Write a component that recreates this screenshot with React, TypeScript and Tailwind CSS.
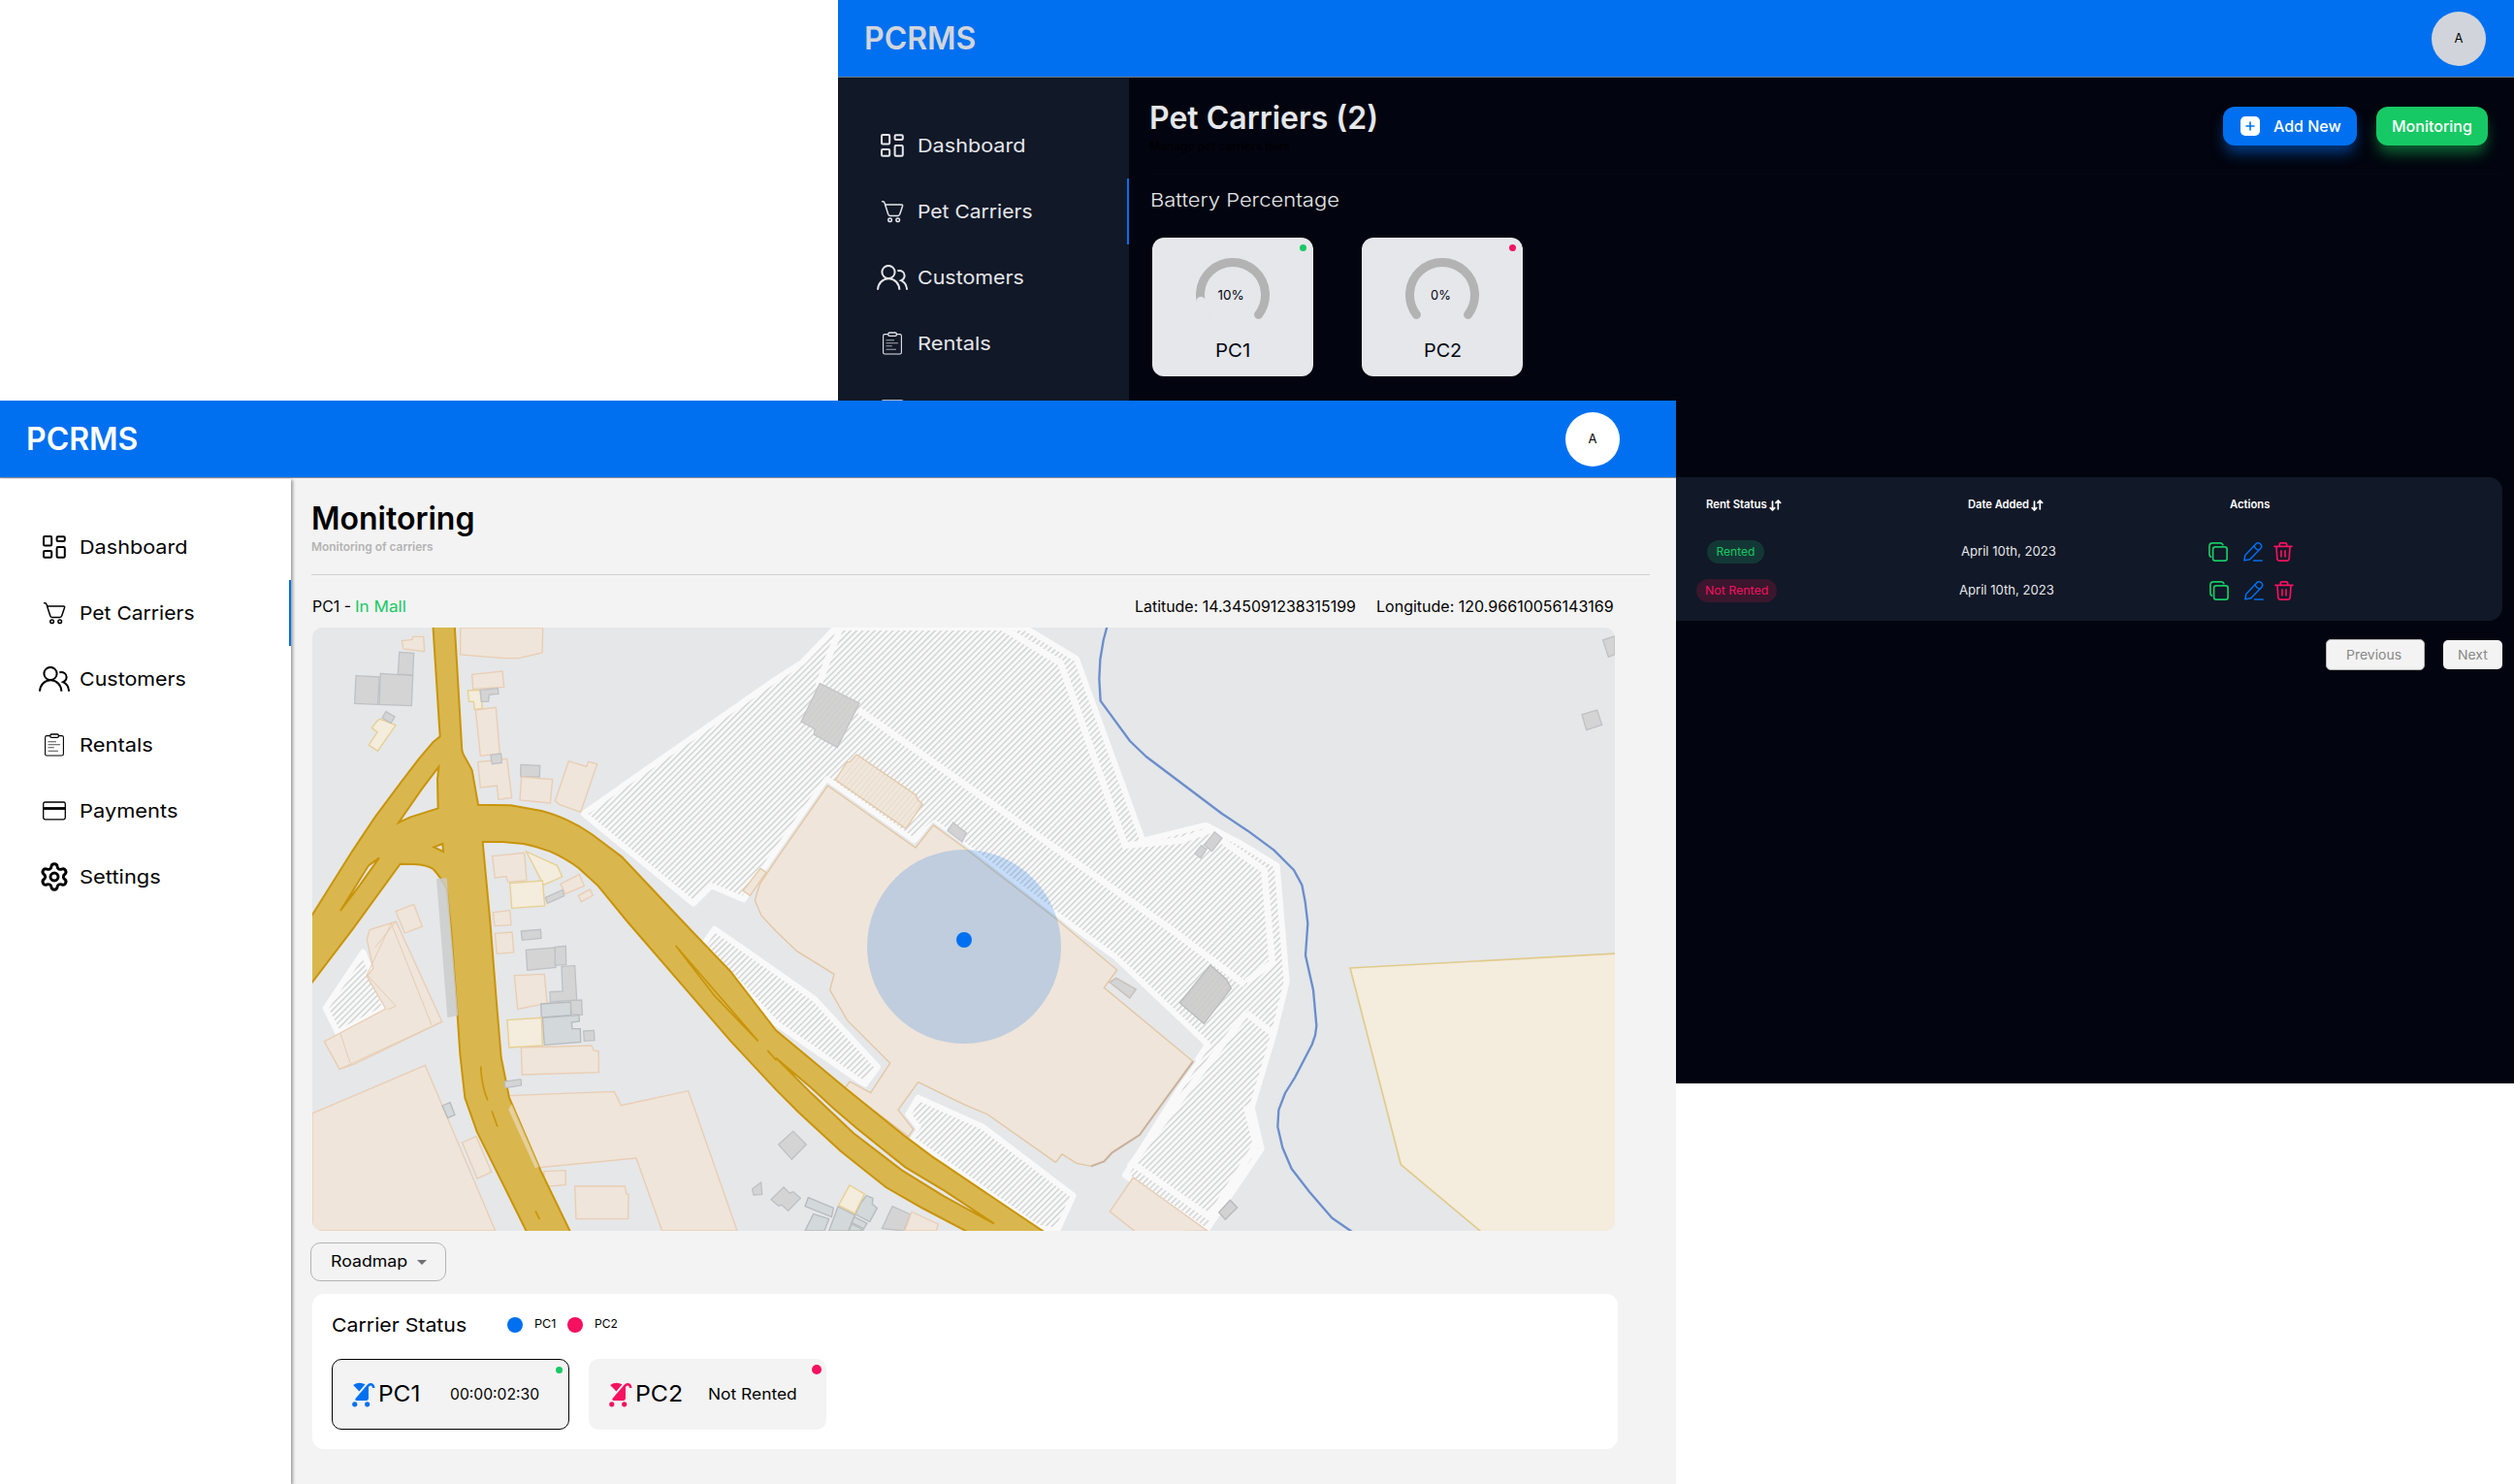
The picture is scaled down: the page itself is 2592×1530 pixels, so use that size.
import { useLayoutEffect, useRef, useState, type ReactNode } from "react";
import { MdStroller } from "react-icons/md";
import { Settings } from "lucide-react";

/** A label stretched or narrowed to a fixed width. */
function Fit({ w, children, className = "" }: { w: number; children: ReactNode; className?: string }) {
  const ref = useRef<HTMLSpanElement>(null);
  const [scale, setScale] = useState(1);
  useLayoutEffect(() => {
    if (ref.current) setScale(w / ref.current.offsetWidth);
  }, [w]);
  return (
    <span className={`inline-block whitespace-nowrap text-left ${className}`} style={{ width: w }}>
      <span ref={ref} className="inline-block origin-left" style={{ transform: `scaleX(${scale})` }}>
        {children}
      </span>
    </span>
  );
}

/* ---------- sidebar icons ---------- */

const DashboardIcon = () => (
  <svg width="24" height="24" viewBox="0 0 24 24" fill="none" stroke="currentColor" strokeWidth="2">
    <rect x="1" y="1" width="8.2" height="9.4" rx="1.2" />
    <rect x="14.6" y="1.2" width="8.2" height="4.8" rx="1.2" />
    <rect x="1" y="16" width="8.2" height="6.8" rx="1.2" />
    <rect x="14.6" y="12" width="8.2" height="10.8" rx="1.2" />
  </svg>
);

const CartIcon = () => (
  <svg width="24" height="24" viewBox="0 0 24 24" fill="none" stroke="currentColor" strokeWidth="1.5" strokeLinecap="round" strokeLinejoin="round">
    <path d="M1.6 1.7h.8c1.1 0 1.5.8 1.8 1.9l.4 1.3" />
    <path d="M4.6 5h17c.8 0 1.2.6 1 1.3l-2.9 8.6c-.3 1-.9 1.5-1.900 1.500H9.600c-1 0-1.600-.5-1.800-1.500L4.600 5z" />
    <circle cx="9.600" cy="20.800" r="1.800" />
    <circle cx="17.700" cy="20.800" r="1.800" />
  </svg>
);

const UsersIcon = () => (
  <svg width="32" height="26" viewBox="0 0 32 26" fill="none" stroke="currentColor" strokeWidth="2">
    <circle cx="12" cy="7.500" r="6.600" />
    <path d="M1 25.800C1.400 19 6 14.300 12.200 14.300S23 19 23.400 25.800" />
    <path d="M21.300 6.200c4.200-.9 7.300 1.400 7.300 4.800 0 2.600-1.500 4.300-3.600 5.200 3.600 1.600 5.800 5 6.100 9.600" />
  </svg>
);

const ClipboardIcon = () => (
  <svg width="22" height="24" viewBox="0 0 22 24" fill="none" stroke="currentColor" strokeWidth="1.1">
    <path d="M6.800 2.600H3.200a1.600 1.600 0 0 0-1.600 1.600v17.200A1.600 1.600 0 0 0 3.200 23h15.600a1.600 1.600 0 0 0 1.600-1.600V4.200a1.600 1.600 0 0 0-1.600-1.600h-3.400" />
    <rect x="6.800" y="1" width="8.600" height="3.400" rx="1.400" strokeWidth="1.300" />
    <path d="M4.500 8.800h8.500M4.500 11.800h12.500M4.500 14.800h6.300M4.500 18.200h10.500" strokeOpacity=".7" />
  </svg>
);

const CardIcon = () => (
  <svg width="24" height="20" viewBox="0 0 24 20" fill="none" stroke="currentColor" strokeWidth="1.300">
    <rect x=".7" y="1" width="22.600" height="17.800" rx="1.800" />
    <path d="M.7 7.500h22.600" strokeWidth="2.800" />
  </svg>
);

const GearIcon = () => <Settings size={32} strokeWidth={2.200} />;

const NAV = [
  { label: "Dashboard", w: 111, Icon: DashboardIcon },
  { label: "Pet Carriers", w: 119, Icon: CartIcon },
  { label: "Customers", w: 110, Icon: UsersIcon },
  { label: "Rentals", w: 76, Icon: ClipboardIcon },
  { label: "Payments", w: 102, Icon: CardIcon },
  { label: "Settings", w: 84, Icon: GearIcon },
];

function Nav() {
  return (
    <nav className="flex flex-col pt-9">
      {NAV.map(({ label, w, Icon }) => (
        <div
          key={label}
          className={`flex h-[68px] items-center border-r-2 pl-10 ${
            label === "Pet Carriers" ? "border-[#0070f0]" : "border-transparent"
          }`}
        >
          <span className="flex w-8 items-center justify-center">
            <Icon />
          </span>
          <Fit w={w} className="ml-[9.500px] text-[19.300px] font-[430]">
            {label}
          </Fit>
        </div>
      ))}
    </nav>
  );
}

function TopBar({ dark = false }: { dark?: boolean }) {
  return (
    <header
      className={`flex h-20 items-center justify-between border-b bg-[#0070f0] pl-[27px] ${
        dark ? "border-[#71777f] pr-[29px] text-[#d1d5db]" : "border-[#8a8f96] pr-[58px] text-white"
      }`}
    >
      <Fit w={115} className="pt-px text-[32px] font-[580] leading-10">
        PCRMS
      </Fit>
      <span
        className={`mt-px flex h-14 w-14 items-center justify-center rounded-full text-[13px] text-black ${
          dark ? "bg-[#d1d5db]" : "bg-white"
        }`}
      >
        A
      </span>
    </header>
  );
}

/* ---------- dark window ---------- */

function Gauge({ percent }: { percent: number }) {
  const point = (deg: number) => {
    const a = (deg * Math.PI) / 180;
    return `${42 + 33.500 * Math.cos(a)} ${42 + 33.500 * Math.sin(a)}`;
  };
  const end = 142.500 + percent * 2.550;
  return (
    <svg width="84" height="84" viewBox="0 0 84 84" fill="none" strokeWidth="9" strokeLinecap="round">
      <path d={`M${point(142.500)}A33.500 33.500 0 1 1 ${point(37.500)}`} stroke="#b3b3b3" />
      {percent > 0 && (
        <path d={`M${point(142.500)}A33.500 33.500 0 0 1 ${point(end)}`} stroke="#e5e7eb" strokeWidth="10" />
      )}
    </svg>
  );
}

function BatteryCard({ name, nameW, percent, percentW, dot }: { name: string; nameW: number; percent: number; percentW: number; dot: string }) {
  return (
    <div className="relative flex h-[143px] w-[166px] flex-col items-center rounded-xl bg-[#e5e7eb] pt-[17px] text-[#02050f]">
      <span className={`absolute right-[7px] top-[7px] h-[7px] w-[7px] rounded-full ${dot}`} />
      <div className="grid place-items-center">
        <div className="col-start-1 row-start-1">
          <Gauge percent={percent} />
        </div>
        <Fit w={percentW} className="col-start-1 row-start-1 mr-1 text-[13.500px] font-[430]">
          {percent}%
        </Fit>
      </div>
      <Fit w={nameW} className="mt-[1px] text-[19.300px] font-[430] leading-7">
        {name}
      </Fit>
    </div>
  );
}

const SortArrows = () => (
  <svg width="13" height="12" viewBox="0 0 13 12" fill="none" stroke="currentColor" strokeWidth="1.700" strokeLinecap="round" strokeLinejoin="round">
    <path d="M3.500 2v9M1.200 8.600 3.500 11l2.200-2.400M9.300 9.800V1M7 3.400 9.300 1l2.300 2.400" />
  </svg>
);

const CopyIcon = () => (
  <svg width="20" height="20" viewBox="0 0 20 20" fill="none" stroke="#17c964" strokeWidth="1.700" strokeLinecap="round">
    <rect x="4.600" y="4.800" width="14.500" height="14.300" rx="2.400" />
    <path d="M2.600 15.200C1.400 14.700.9 13.900.9 12.600V4.400C.9 2.200 2 .9 4.300.9h7.900c1.300 0 2.100.5 2.600 1.700" />
  </svg>
);

const PenIcon = () => (
  <svg width="20" height="20" viewBox="0 0 20 20" fill="none" stroke="#0070f0" strokeWidth="1.500" strokeLinecap="round" strokeLinejoin="round">
    <path d="M.9 18.800 1.600 14.300Q1.700 13.700 2.200 13.100L12.700 1.900Q14.900-.2 17.400 1.700 19.800 3.900 17.900 6.300L7.200 17.300Q6.700 17.900 5.900 18z" />
    <path d="M11.200 3.700Q12 7.300 15.800 8.200M10.500 18.900H19.200" />
  </svg>
);

const TrashIcon = () => (
  <svg width="20" height="20" viewBox="0 0 20 20" fill="none" stroke="#f31260" strokeWidth="1.700" strokeLinecap="round" strokeLinejoin="round">
    <path d="M1 4.300h18M6.300 4V2.200C6.300 1.300 6.800.9 7.600.9h4.800c.8 0 1.300.4 1.300 1.300V4M3 4.500l.8 12.300c.1 1.500.8 2.300 2.400 2.300h7.600c1.600 0 2.300-.8 2.400-2.300L17 4.500M8 8.800v6M12 8.800v6" />
  </svg>
);

function Actions() {
  return (
    <>
      <CopyIcon />
      <span className="ml-[15.500px]">
        <PenIcon />
      </span>
      <span className="ml-[11.500px]">
        <TrashIcon />
      </span>
    </>
  );
}

function DarkWindow() {
  return (
    <section className="absolute left-[864px] top-0 flex h-[1117px] w-[1728px] flex-col overflow-hidden bg-[#02050f]">
      <TopBar dark />
      <div className="flex flex-1">
        <aside className="w-[300px] bg-[#111827] text-[#e5e7eb]">
          <Nav />
        </aside>
        <main className="flex flex-1 flex-col pl-[21px] pr-3 pt-[22px] text-[#e5e7eb]">
          <div className="flex justify-between pr-[15px]">
            <div className="flex flex-col">
              <Fit w={236} className="text-[32px] font-[580] leading-10">
                Pet Carriers (2)
              </Fit>
              <Fit w={145} className="text-xs font-semibold leading-[18px] text-[#000006]">
                Manage pet carriers here
              </Fit>
            </div>
            <div className="mt-2 flex h-10 gap-5 text-base font-[460] text-white">
              <button className="flex w-[138px] items-center rounded-xl bg-[#0070f0] pl-[18px] shadow-[0_10px_14px_-2px_#003a80]">
                <svg width="20" height="20" viewBox="0 0 20 20">
                  <rect width="20" height="20" rx="5" fill="#fff" />
                  <path d="M10 6v8M6 10h8" stroke="#0070f0" strokeWidth="1.600" strokeLinecap="round" />
                </svg>
                <Fit w={70} className="ml-[14px]">
                  Add New
                </Fit>
              </button>
              <button className="flex w-[115px] items-center justify-center rounded-xl bg-[#17c964] shadow-[0_10px_14px_-2px_#0b6332]">
                <Fit w={83}>Monitoring</Fit>
              </button>
            </div>
          </div>
          <hr className="mt-[19px] border-[#050812]" />
          <Fit w={195} className="ml-px mt-3 text-[19.300px] font-[340] leading-7">
            Battery Percentage
          </Fit>
          <div className="ml-[3px] mt-[25px] flex gap-[50px]">
            <BatteryCard name="PC1" nameW={36} percent={10} percentW={27} dot="bg-[#17c964]" />
            <BatteryCard name="PC2" nameW={39} percent={0} percentW={21} dot="bg-[#f31260]" />
          </div>
          <div className="mt-[104px] h-[148px] rounded-[14px] bg-[#111827] pt-2">
            <div className="mb-2 grid h-10 grid-cols-[564px_272px_257px_1fr] items-center pt-px text-[11.500px] font-semibold text-white">
              <span />
              <span className="flex items-center pl-[10px]">
                <Fit w={63}>Rent Status</Fit>
                <span className="ml-[2px]">
                  <SortArrows />
                </span>
              </span>
              <span className="flex items-center pl-2">
                <Fit w={63}>Date Added</Fit>
                <span className="ml-[2px]">
                  <SortArrows />
                </span>
              </span>
              <span className="pl-[21px]">
                <Fit w={41}>Actions</Fit>
              </span>
            </div>
            <div className="grid h-10 grid-cols-[564px_272px_257px_1fr] items-center pt-px">
              <span />
              <span className="ml-[11px] flex h-6 w-[59px] items-center justify-center rounded-xl bg-[#133735] text-xs text-[#17c964]">
                <Fit w={40}>Rented</Fit>
              </span>
              <span className="pl-px text-[13.500px] font-[380]">
                <Fit w={98}>April 10th, 2023</Fit>
              </span>
              <span className="-ml-px flex items-center">
                <Actions />
              </span>
            </div>
            <div className="grid h-10 grid-cols-[564px_272px_257px_1fr] items-center pt-px">
              <span />
              <span className="flex h-6 w-[83px] items-center justify-center rounded-xl bg-[#3a172d] text-xs text-[#f31260]">
                <Fit w={65}>Not Rented</Fit>
              </span>
              <span className="-ml-px text-[13.500px] font-[380]">
                <Fit w={98}>April 10th, 2023</Fit>
              </span>
              <span className="flex items-center">
                <Actions />
              </span>
            </div>
          </div>
          <div className="mt-[19px] flex items-center justify-end gap-[19px] text-[13.500px] text-[#888888]">
            <button className="flex h-8 w-[102px] items-center justify-center rounded-[5px] border border-[#b3b3b3] bg-[#f3f3f3]">
              <Fit w={57} className="-ml-1">
                Previous
              </Fit>
            </button>
            <button className="flex h-[30px] w-[61px] items-center justify-center rounded-[5px] bg-[#f3f3f3]">
              <Fit w={31}>Next</Fit>
            </button>
          </div>
        </main>
      </div>
    </section>
  );
}

/* ---------- map ---------- */

type Kind = "peach" | "cream" | "grey" | "slate";

const PAINT: Record<Kind, [string, string]> = {
  peach: ["#efe5da", "#e9cdb3"],
  cream: ["#f4ecdc", "#e6cf8f"],
  grey: ["#d4d4d4", "#bfc1c4"],
  slate: ["#d3d8da", "#b7babd"],
};

const BUILDINGS: [Kind, string][] = [
  ["peach", "283,62 315,58 318,49 350,49 353,95 287,87"],
  ["grey", "275,97 320,100 317,168 271,165"],
  ["grey", "141,170 213,174 209,259 137,256"],
  ["grey", "217,163 317,170 313,263 213,259"],
  ["cream", "215,304 264,323 208,403 181,384 207,345 190,331 207,310"],
  ["grey", "234,281 261,297 249,317 222,300"],
  ["peach", "464,21 719,21 717,99 645,116 600,116 464,105"],
  ["peach", "500,166 594,156 599,205 503,211"],
  ["cream", "487,216 525,214 532,272 508,274 505,250 491,250"],
  ["grey", "525,214 580,209 582,226 553,229 551,250 529,250"],
  ["peach", "511,276 574,268 586,411 526,418"],
  ["peach", "518,437 608,427 623,547 582,553 577,510 526,516"],
  ["grey", "558,415 590,411 592,439 562,443"],
  ["grey", "651,445 710,448 709,483 650,482"],
  ["peach", "653,483 749,491 742,564 648,555"],
  ["peach", "799,434 854,451 860,436 887,443 836,592 770,568 757,557"],
  ["peach", "563,728 662,718 669,803 611,808 606,791 571,795"],
  ["cream", "668,714 763,757 779,792 721,817"],
  ["cream", "617,812 718,804 725,882 623,889"],
  ["peach", "774,814 832,784 847,820 789,845"],
  ["grey", "727,856 780,832 785,851 733,874"],
  ["peach", "829,850 865,831 874,849 838,869"],
  ["peach", "565,902 617,896 621,941 570,944"],
  ["peach", "264,899 320,877 346,945 292,966"],
  ["peach", "571,967 624,963 629,1026 577,1030"],
  ["grey", "652,960 712,955 714,982 655,988"],
  ["grey", "667,1018 757,1011 759,1072 671,1081"],
  ["grey", "757,1009 790,1006 791,1063 757,1066"],
  ["grey", "777,1069 818,1067 824,1173 742,1179 741,1148 780,1146"],
  ["peach", "631,1097 724,1093 732,1183 641,1201"],
  ["slate", "713,1185 805,1179 806,1220 715,1227"],
  ["grey", "805,1175 839,1173 841,1219 808,1217"],
  ["slate", "718,1228 831,1220 832,1239 808,1242 810,1262 835,1262 836,1303 724,1312"],
  ["grey", "845,1269 877,1267 879,1298 847,1300"],
  ["cream", "609,1235 715,1228 718,1314 615,1320"],
  ["peach", "652,1320 870,1314 876,1329 891,1331 892,1397 655,1404"],
  ["peach", "6,1524 355,1375 572,1887 6,1887"],
  ["slate", "408,1500 432,1490 447,1528 425,1538"],
  ["peach", "470,1614 513,1595 560,1705 516,1725"],
  ["peach", "183,956 265,930 407,1240 137,1371 90,1387 43,1301 233,1200 175,1100 194,1075 175,985"],
  ["peach", "613,1469 940,1456 961,1499 1169,1454 1320,1887 1088,1887 1008,1662 706,1691 620,1500"],
  ["peach", "722,1703 789,1700 790,1745 726,1750"],
  ["peach", "818,1749 973,1749 977,1772 984,1774 983,1850 822,1850"],
  ["grey", "1367,1757 1394,1737 1397,1774 1371,1776"],
  ["grey", "1448,1620 1493,1579 1534,1620 1489,1666"],
  ["grey", "1425,1790 1464,1752 1482,1770 1494,1766 1516,1786 1478,1825 1458,1807 1448,1810"],
  ["slate", "1540,1784 1618,1816 1612,1844 1530,1811"],
  ["slate", "1556,1835 1604,1850 1590,1887 1530,1887"],
  ["slate", "1632,1812 1684,1838 1664,1887 1604,1887"],
  ["slate", "1720,1778 1740,1786 1738,1804 1753,1817 1730,1859 1686,1836 1700,1805"],
  ["slate", "1683,1844 1722,1864 1712,1880 1674,1862"],
  ["slate", "1674,1866 1710,1884 1700,1887 1666,1887"],
  ["cream", "1668,1746 1714,1773 1684,1833 1634,1808"],
  ["grey", "1800,1811 1856,1836 1836,1887 1768,1880"],
  ["peach", "1860,1828 1942,1866 1936,1887 1838,1887"],
  ["grey", "3998,60 4035,47 4035,104 4015,112"],
  ["grey", "3933,290 3980,276 3995,322 3947,338"],
];

const FIELD = "3216,1074 4045,1029 4045,1897 3630,1897 3373,1682";

const LOT =
  "845,597 1000,487 1440,181 1520,130 1625,21 2210,21 2370,118 2575,680 2770,632 2880,690 2990,758 3020,1116 2980,1279 2912,1506 2942,1634 2770,1887 2520,1715 2775,1310 2490,1040 2310,910 1930,625 1865,680 1598,490 1400,770 1340,862 1240,820 1185,875";

const SIDE_LOTS = [
  "1250,953 1440,1085 1560,1170 1755,1380 1715,1435 1440,1245 1215,1002",
  "1880,1475 2080,1565 2360,1778 2310,1887 2250,1877 1852,1598 1880,1565 1848,1528",
  "163,1025 233,1198 85,1275 47,1198",
];

const MALL =
  "1600,510 1872,702 1927,632 2020,700 2310,925 2495,1080 2455,1135 2730,1363 2630,1500 2565,1590 2480,1645 2455,1672 2415,1687 2370,1678 2325,1650 2305,1675 2095,1527 2020,1495 1880,1427 1818,1513 1865,1573 1850,1595 1653,1447 1668,1425 1733,1460 1793,1368 1660,1235 1607,1142 1620,1093 1505,1022 1440,960 1395,912 1375,865 1390,815 1440,740";

const ROAD =
  "M379 11H446L468 385Q468 405 474 415L500 462L519 569L620 571L715 588Q760 600 795 617Q835 635 870 660L963 730L1050 822L1180 960L1300 1085L1440 1267L1660 1450L1840 1595L1920 1655L2275 1894H2040L1890 1815L1780 1752L1640 1640L1510 1520L1440 1450L1300 1300L980 930L890 820L830 765Q790 735 740 713Q700 698 660 690L595 684H533L556 930L575 1170L590 1350L615 1475L712 1700L806 1894H671L515 1580L478 1475L463 1340L455 1220L435 950L422 830Q405 795 380 768Q362 755 320 753L278 752L130 955L-5 1132V927L130 712L200 607L280 500L335 428L380 375L401 358Z" +
  "M397 452L345 520L273 624L310 607L395 580L393 490Z M382 700L409 690L411 714Z M213 733L180 757L93 897L155 815Z" +
  "M1440 1352L1550 1445L1620 1510L1690 1570L1840 1690L1960 1762L2115 1865L1960 1780L1830 1700L1680 1585L1550 1462Z";

const RIVER =
  "2465,15 2453,60 2443,120 2440,180 2444,248 2535,372 2585,420 2820,597 2900,650 2980,709 3042,771 3067,817 3077,869 3085,936 3078,1035 3102,1142 3112,1253 3108,1282 3098,1311 3045,1413 3015,1461 2995,1513 2992,1565 3007,1630 3035,1695 3090,1766 3160,1847 3225,1892";

function CarrierMap() {
  return (
    <svg className="mt-[10px] block h-[622px] w-[1343px] rounded-[10px]" viewBox="6 21 4029 1866" preserveAspectRatio="none">
      <defs>
        <pattern id="hatch" width="13.200" height="13.200" patternUnits="userSpaceOnUse" patternTransform="rotate(-45)">
          <rect width="13.200" height="13.200" fill="#f9f9f9" />
          <rect width="13.200" height="4.200" fill="#cfd1d1" />
        </pattern>
        <pattern id="roofHatch" width="13.200" height="13.200" patternUnits="userSpaceOnUse" patternTransform="rotate(-50)">
          <rect width="13.200" height="2" fill="#c2b9b0" fillOpacity=".35" />
        </pattern>
      </defs>
      <rect x="0" y="0" width="4100" height="1900" fill="#e5e7e9" />

      <g fill="url(#hatch)" stroke="#f9f9f9" strokeWidth="18" strokeLinejoin="round">
        <polygon points={LOT} />
        {SIDE_LOTS.map((p) => (
          <polygon key={p} points={p} />
        ))}
      </g>
      <g fill="none" stroke="#f9f9f9" strokeWidth="20">
        <path d="M1640 21L1600 120L1572 200M1695 275L2670 960L2890 1125" />
        <path d="M2140 21L2320 130L2360 240L2520 695L2690 680L2790 645L2830 687L2950 771L2975 1057L2895 1116" />
        <path d="M2895 1213L2975 1275M2895 1213L2540 1680L2560 1690L2790 1850M2895 1500L2925 1620L2780 1850" />
      </g>

      <polygon points={MALL} fill="#e5e7e9" stroke="#e5e7e9" strokeWidth="14" />
      <polygon points={MALL} fill="#efe5da" stroke="#e2c6a2" strokeWidth="4" />
      <path d="M2730 1363L2630 1500L2565 1590L2480 1645L2455 1672L2415 1687" fill="none" stroke="#c9b19b" strokeWidth="6" />

      {BUILDINGS.map(([kind, points]) => (
        <polygon key={points} points={points} fill={PAINT[kind][0]} stroke={PAINT[kind][1]} strokeWidth="4" />
      ))}
      <polygon points={FIELD} fill="#f4ecdc" stroke="#e0cb8c" strokeWidth="5" />
      <g fill="none" stroke="#e6ccb2" strokeWidth="3">
        <path d="M250 936L175 1095L265 1192L240 1202M250 936L375 1250M93 1277L123 1368M90 1387L407 1240M265 930L200 1010" />
      </g>

      <path d={ROAD} fill="#d9b74e" stroke="#c99409" strokeWidth="6" fillRule="evenodd" />
      <path d="M1130 1005L1260 1155L1385 1300L1250 1160ZM1415 1330L1440 1358M527 1380Q530 1440 548 1482M562 1518L578 1563M697 1827L708 1850" fill="none" stroke="#c99409" strokeWidth="5" strokeLinecap="round" />

      <polygon points="390,798 422,796 457,1220 424,1228" fill="#cbcbcb" fillOpacity=".85" />
      <polygon points="600,1425 651,1418 653,1437 603,1445" fill="#d4d4d4" stroke="#b7b9bc" strokeWidth="3" />
      <polygon points="613,1512 623,1495 708,1690 695,1692" fill="#efe5da" fillOpacity=".55" />

      <g strokeWidth="4">
        <polygon points="1576,194 1698,255 1630,392 1558,352 1560,334 1518,312" fill="#d2d2d2" stroke="#c3c4c8" />
        <polygon points="1690,414 1874,540 1877,552 1893,567 1842,643 1624,492 1660,437 1669,436" fill="#f0e6da" stroke="#e5c9a5" />
        <polygon points="1392,766 1410,778 1360,850 1338,835" fill="#f0e6da" stroke="#e5c9a5" />
        <polygon points="1988,624 2029,656 2016,684 1971,650" fill="#d2d2d2" stroke="#c3c4c8" />
        <polygon points="2797,653 2820,672 2789,713 2765,694" fill="#d2d2d2" stroke="#c3c4c8" />
        <polygon points="2756,695 2772,707 2754,734 2736,720" fill="#d2d2d2" stroke="#c3c4c8" />
        <polygon points="2784,1065 2834,1110 2848,1137 2764,1246 2689,1182" fill="#cfcfcf" stroke="#b9bbbd" />
        <polygon points="2493,1105 2554,1140 2534,1167 2472,1118" fill="#d4d4d4" stroke="#c9bfb8" />
        <polygon points="2545,1722 2775,1887 2555,1892 2473,1827" fill="#efe5da" stroke="#e6ccb2" />
        <polygon points="2845,1792 2867,1815 2830,1852 2810,1830" fill="#d2d2d2" stroke="#b7b9bc" />
      </g>
      <g fill="url(#roofHatch)">
        <polygon points="1576,194 1698,255 1630,392 1558,352 1560,334 1518,312" />
        <polygon points="1690,414 1874,540 1893,567 1842,643 1624,492" />
        <polygon points="2784,1065 2834,1110 2848,1137 2764,1246 2689,1182" />
      </g>

      <polyline points={RIVER} fill="none" stroke="#6b8ecb" strokeWidth="7" strokeLinejoin="round" />
      <circle cx="2022" cy="1008" r="300" fill="#0070f0" fillOpacity=".2" />
      <circle cx="2022" cy="987" r="24" fill="#0070f0" />
    </svg>
  );
}

/* ---------- light window ---------- */

function LightWindow() {
  return (
    <section className="absolute left-0 top-[413px] flex h-[1117px] w-[1728px] flex-col bg-[#f3f3f3] text-black">
      <TopBar />
      <div className="flex flex-1">
        <aside className="mt-px w-[300px] bg-white shadow-[2px_1px_3px_rgba(0,0,0,0.35)]">
          <Nav />
        </aside>
        <main className="flex flex-1 flex-col items-start pl-[22px] pt-[22px]">
          <Fit w={168} className="-ml-px text-[32px] font-semibold leading-10">
            Monitoring
          </Fit>
          <Fit w={126} className="-ml-px text-xs font-semibold leading-[18px] text-[#b3b3b3]">
            Monitoring of carriers
          </Fit>
          <hr className="-ml-px mt-[19px] w-[1380px] border-[#d0d0d0]" />
          <div className="mt-5 flex h-6 w-[1342px] items-center pt-px text-[15.500px] font-[370]">
            <Fit w={40}>PC1 -</Fit>
            <Fit w={53} className="ml-[4px] text-[#17c964]">
              In Mall
            </Fit>
            <Fit w={228} className="ml-auto">
              Latitude: 14.345091238315199
            </Fit>
            <Fit w={245} className="ml-[21px]">
              Longitude: 120.96610056143169
            </Fit>
          </div>
          <CarrierMap />
          <button className="-ml-[2px] mt-3 flex h-10 w-[140px] items-center rounded-[10px] border border-[#b3b3b3] pl-5 text-[15.500px] font-[370]">
            <Fit w={79}>Roadmap</Fit>
            <span className="ml-[10px] border-x-[5px] border-t-[5px] border-x-transparent border-t-[#6f6f78]" />
          </button>
          <div className="mt-[13px] h-40 w-[1346px] rounded-xl bg-white pl-5 pt-5">
            <div className="flex h-6 items-center text-[11.500px] font-[430]">
              <Fit w={139} className="text-[19.300px]">
                Carrier Status
              </Fit>
              <span className="ml-[42px] h-4 w-4 rounded-full bg-[#0070f0]" />
              <Fit w={22} className="ml-3">
                PC1
              </Fit>
              <span className="ml-3 h-4 w-4 rounded-full bg-[#f5115f]" />
              <Fit w={24} className="ml-3">
                PC2
              </Fit>
            </div>
            <div className="mt-[23px] flex gap-5">
              <div className="relative flex h-[73px] w-[245px] items-center rounded-[10px] border border-black bg-[#f3f3f3] pl-4">
                <MdStroller size={31} className="-ml-px text-[#0070f0]" />
                <Fit w={43} className="ml-px text-[23.300px] font-[430]">
                  PC1
                </Fit>
                <Fit w={92} className="ml-[31px] text-[15.500px] font-[370]">
                  00:00:02:30
                </Fit>
                <span className="absolute right-[6px] top-[7px] h-[7px] w-[7px] rounded-full bg-[#17c964]" />
              </div>
              <div className="relative flex h-[73px] w-[245px] items-center rounded-[10px] bg-[#f3f3f3] pl-[17px]">
                <MdStroller size={31} className="-ml-px text-[#f5115f]" />
                <Fit w={49} className="ml-px text-[23.300px] font-[430]">
                  PC2
                </Fit>
                <Fit w={92} className="ml-[26px] text-[15.500px] font-[370]">
                  Not Rented
                </Fit>
                <span className="absolute right-[5px] top-[6px] h-[10px] w-[10px] rounded-full bg-[#f5115f]" />
              </div>
            </div>
          </div>
        </main>
      </div>
    </section>
  );
}

export default function App() {
  return (
    <div className="relative h-[1530px] w-[2592px] overflow-hidden bg-white font-['Inter',sans-serif]">
      <DarkWindow />
      <LightWindow />
    </div>
  );
}
